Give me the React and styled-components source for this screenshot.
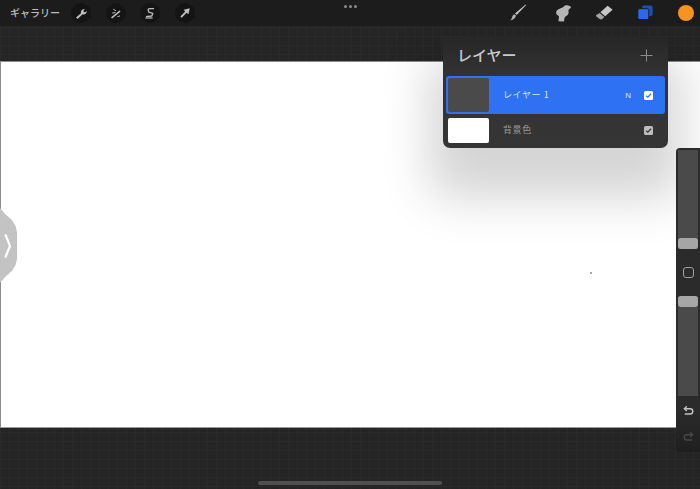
import React from "react";
import styled, { createGlobalStyle } from "styled-components";

const GlobalStyle = createGlobalStyle`
  html, body {
    margin: 0;
    padding: 0;
    background: #252525;
  }
  body {
    font-family: "Noto Sans CJK JP", "Noto Sans", sans-serif;
  }
`;

const Screen = styled.div`
  position: relative;
  width: 700px;
  height: 489px;
  overflow: hidden;
  display: flex;
  flex-direction: column;
  background-color: #252525;
  background-image:
    linear-gradient(to right, #2a2a2a 1px, transparent 1px),
    linear-gradient(to bottom, #2a2a2a 1px, transparent 1px);
  background-size: 9px 9px;
`;

const TopBar = styled.header`
  height: 26px;
  flex: none;
  display: flex;
  align-items: center;
  justify-content: space-between;
  padding: 0 6px 0 10px;
  background: #1c1c1c;
  position: relative;
  z-index: 3;
`;

const Group = styled.div`
  display: flex;
  align-items: center;
`;

const Gallery = styled.span`
  width: 61px;
  flex: none;
  font-size: 10px;
  font-weight: 500;
  line-height: 26px;
  color: #bcbcbc;
  white-space: nowrap;
`;

const RoundTool = styled.button`
  width: 20px;
  height: 20px;
  padding: 0;
  margin-right: 14.5px;
  border: none;
  border-radius: 50%;
  background: #141414;
  display: flex;
  align-items: center;
  justify-content: center;
`;

const PaintTool = styled.button`
  width: 20px;
  height: 20px;
  padding: 0;
  margin-left: ${(p) => p.$gap}px;
  border: none;
  background: transparent;
  display: flex;
  align-items: center;
  justify-content: center;
`;

const ColorDot = styled.div`
  width: 16px;
  height: 16px;
  margin-left: 23px;
  border-radius: 50%;
  background: #f7931e;
`;

const Dots = styled.div`
  position: absolute;
  left: 344px;
  top: 5px;
  display: flex;
  gap: 2px;
  span {
    width: 3px;
    height: 3px;
    border-radius: 50%;
    background: #8a8a8a;
  }
`;

const Canvas = styled.main`
  margin: 35px 0 61px;
  flex: 1;
  background: #ffffff;
  border-top: 1px solid #8c8c8c;
  border-left: 1px solid #8c8c8c;
  border-bottom: 1px solid #9a9a9a;
  position: relative;
`;

const Speck = styled.i`
  position: absolute;
  left: 589px;
  top: 210px;
  width: 2px;
  height: 2px;
  background: #b5a5a5;
`;

const Panel = styled.section`
  position: absolute;
  left: 443px;
  top: 37px;
  width: 225px;
  height: 111px;
  box-sizing: border-box;
  padding: 0 3px;
  border-radius: 0 0 7px 7px;
  background: linear-gradient(to bottom, #262626 0%, #333333 35%, #353535 100%);
  box-shadow: 0 36px 48px 14px rgba(0, 0, 0, 0.17);
  z-index: 2;
`;

const PanelHead = styled.div`
  height: 39px;
  display: flex;
  align-items: center;
  justify-content: space-between;
  padding: 0 12px 3px 12px;
  box-sizing: border-box;
`;

const PanelTitle = styled.h2`
  margin: 0 0 0 -1px;
  font-size: 15px;
  font-weight: 500;
  line-height: 20px;
  color: #c9c9c9;
`;

const LayerRow = styled.div`
  height: ${(p) => (p.$active ? 38 : 28)}px;
  margin-bottom: ${(p) => (p.$active ? 2 : 0)}px;
  box-sizing: border-box;
  display: flex;
  align-items: center;
  padding: 0 12px 0 2px;
  border-radius: 3px;
  background: ${(p) => (p.$active ? "#2e72f3" : "transparent")};
  color: ${(p) => (p.$active ? "#d9e5fb" : "#9b9b9b")};
`;

const Thumb = styled.div`
  width: 41px;
  height: ${(p) => (p.$active ? 34 : 25)}px;
  flex: none;
  border-radius: 2px;
  background: ${(p) => (p.$active ? "#4a4a4a" : "#ffffff")};
`;

const LayerName = styled.span`
  margin-left: 14px;
  flex: 1;
  font-size: 9px;
  line-height: 12px;
  white-space: nowrap;
  letter-spacing: 0.6px;
`;

const Mode = styled.span`
  margin-right: 13px;
  font-family: "Liberation Sans", sans-serif;
  font-size: 8px;
  color: #d9e5fb;
`;

const Check = styled.div`
  width: 9px;
  height: 9px;
  flex: none;
  border-radius: 1.5px;
  background: ${(p) => (p.$active ? "#ffffff" : "#bdbdbd")};
  display: flex;
  align-items: center;
  justify-content: center;
`;

const SideBar = styled.aside`
  position: absolute;
  right: 0;
  top: 148px;
  width: 24px;
  height: 304px;
  box-sizing: border-box;
  padding: 2px 2px 0;
  border-radius: 4px 0 0 4px;
  background: linear-gradient(to bottom, #2b2b2b 0%, #2b2b2b 86%, #1f1f1f 100%);
  display: flex;
  flex-direction: column;
  align-items: center;
  z-index: 2;
`;

const Track = styled.div`
  position: relative;
  width: 20px;
  height: ${(p) => p.$height}px;
  flex: none;
  background: #4a4a4a;
  border-radius: 1px;
`;

const Knob = styled.div`
  position: absolute;
  left: 0;
  right: 0;
  height: 11px;
  border-radius: 3px;
  background: #a6a6a6;
  ${(p) => (p.$end ? "bottom: 0;" : "top: 0;")}
`;

const ModifyBtn = styled.div`
  width: 11px;
  height: 11px;
  margin: 18px 0 18px;
  flex: none;
  box-sizing: border-box;
  border: 1.5px solid #a0a0a0;
  border-radius: 3px;
`;

const HistoryBtn = styled.div`
  height: 14px;
  margin-top: ${(p) => p.$top}px;
  display: flex;
  align-items: center;
  justify-content: center;
`;

const SideHandle = styled.div`
  position: absolute;
  left: 0;
  top: 208px;
  width: 17px;
  height: 75px;
  background: #c3c3c3;
  clip-path: polygon(0 0, 30% 8%, 70% 16%, 92% 24%, 100% 32%, 100% 68%, 92% 76%, 70% 84%, 30% 92%, 0 100%);
  display: flex;
  align-items: center;
  padding-left: 4px;
  box-sizing: border-box;
  z-index: 2;
`;

const HomeBar = styled.div`
  position: absolute;
  left: 258px;
  bottom: 4px;
  width: 184px;
  height: 4px;
  border-radius: 2px;
  background: #505050;
  z-index: 2;
`;

const toolColor = "#bdbdbd";

const WrenchIcon = () => (
  <svg width="14" height="14" viewBox="0 0 14 14">
    <path
      d="M2 11.4 7 7.2C6.6 5.8 7.2 4.4 8.4 3.6 9.2 3.2 10 3.1 10.8 3.4L9.4 4.8 9.8 6 11.2 6.3 12.6 5C12.8 6.2 12.3 7.4 11.3 8 10.4 8.6 9.4 8.6 8.6 8.2L3.6 13Z"
      fill={toolColor}
    />
  </svg>
);

const WandIcon = () => (
  <svg width="14" height="14" viewBox="0 0 14 14" stroke={toolColor} fill="none" strokeLinecap="round">
    <path d="M3 11.6 10.6 5.4" strokeWidth="1.5" />
    <path d="M4.6 3.4 6.6 4.6M3.6 7 6 6.6M8.8 10.6 10.6 10" strokeWidth="1" />
  </svg>
);

const SelectIcon = () => (
  <svg width="14" height="14" viewBox="0 0 14 14" fill="none" stroke={toolColor} strokeWidth="1.3">
    <path d="M11 2.6H6.6C5.6 2.6 5 3.2 5.2 4L5.8 6.2 9.8 7.4 8.8 10 3 10.6" strokeLinejoin="round" />
    <path d="M2.4 12H9.6" strokeWidth="1.2" />
  </svg>
);

const ArrowIcon = () => (
  <svg width="12" height="12" viewBox="0 0 14 14">
    <path d="M12.6 1.4 11 8.6 8.9 6.8 3.2 12.6 1.6 11 7.2 5.2 5.4 3.2Z" fill={toolColor} />
  </svg>
);

const BrushIcon = () => (
  <svg width="20" height="20" viewBox="0 0 20 20">
    <path d="M18.2 2 8.6 12 7 10.6 17.6 1.6Z" fill="#c4c4c4" />
    <path d="M6.4 11.2 8 12.8C7.6 15 5.8 16.6 2.2 17.6 3.8 16 4 14.6 4.4 13.2 4.8 12.2 5.6 11.6 6.4 11.2Z" fill="#b0b0b0" />
  </svg>
);

const SmudgeIcon = () => (
  <svg width="20" height="20" viewBox="0 0 20 20">
    <path
      d="M12 2.4C13.6 1.8 16.4 2.4 17.6 3.6 18.2 4.6 17.8 5.4 16.6 5.8L15.4 7 15.6 10C15.4 11.6 14 12.6 12.8 13.2L11.6 14.4 11 18.4 5.4 18.2 6 13.6 3.4 11C2.8 9.2 3.2 7.4 5 6.4L8.2 5C9.6 4.6 10.8 3.4 12 2.4Z"
      fill="#b5b5b5"
    />
  </svg>
);

const EraserIcon = () => (
  <svg width="20" height="20" viewBox="0 0 20 20">
    <path d="M13.6 2.8 18.6 6.8 11.2 13.2 6.4 9.2Z" fill="#c6c6c6" />
    <path d="M5.6 10 10.4 14 8.2 16C7.4 16.6 6.4 16.6 5.6 16L2.4 13.6C1.8 13 1.8 12.4 2.4 12Z" fill="#a2a2a2" />
  </svg>
);

const LayersIcon = () => (
  <svg width="20" height="20" viewBox="0 0 20 20">
    <rect x="7" y="2.4" width="10.6" height="10.6" rx="2" fill="#1d4fb4" />
    <rect x="2.8" y="5.6" width="11" height="11" rx="2" stroke="#1c1c1c" strokeWidth="1" fill="#2b68ea" />
  </svg>
);

const PlusIcon = () => (
  <svg width="13" height="13" viewBox="0 0 13 13" stroke="#8c8c8c" strokeWidth="1">
    <path d="M6.5 0.5V12.5M0.5 6.5H12.5" />
  </svg>
);

const Chevron = () => (
  <svg width="8" height="24" viewBox="0 0 8 24" fill="none" stroke="#ffffff" strokeWidth="2.2" strokeLinecap="round">
    <path d="M1.6 1.2 6 12 1.6 22.8" />
  </svg>
);

const CheckMark = ({ color }) => (
  <svg width="7" height="7" viewBox="0 0 7 7" fill="none" stroke={color} strokeWidth="1.3">
    <path d="M1 3.8 2.8 5.2 6 1.8" />
  </svg>
);

const UndoIcon = () => (
  <svg width="11" height="10" viewBox="0 0 13 12" fill="none" stroke="#c2c2c2" strokeWidth="1.7" strokeLinecap="round">
    <path d="M4 1 1.6 3.2 4 5.4" />
    <path d="M2 3.2H8.6C10.6 3.2 11.6 4.6 11.6 6.2S10.6 9.6 8.6 9.6H2.6" />
  </svg>
);

const RedoIcon = () => (
  <svg width="11" height="10" viewBox="0 0 13 12" fill="none" stroke="#484848" strokeWidth="1.7" strokeLinecap="round">
    <path d="M9 1 11.4 3.2 9 5.4" />
    <path d="M11 3.2H4.4C2.4 3.2 1.4 4.6 1.4 6.2S2.4 9.6 4.4 9.6H10.4" />
  </svg>
);

const layers = [
  { name: "レイヤー 1", active: true },
  { name: "背景色", active: false },
];

export default function App() {
  return (
    <>
      <GlobalStyle />
      <Screen>
        <TopBar>
          <Group>
            <Gallery>ギャラリー</Gallery>
            <RoundTool><WrenchIcon /></RoundTool>
            <RoundTool><WandIcon /></RoundTool>
            <RoundTool><SelectIcon /></RoundTool>
            <RoundTool><ArrowIcon /></RoundTool>
          </Group>
          <Dots><span /><span /><span /></Dots>
          <Group>
            <PaintTool $gap={0}><BrushIcon /></PaintTool>
            <PaintTool $gap={25}><SmudgeIcon /></PaintTool>
            <PaintTool $gap={21}><EraserIcon /></PaintTool>
            <PaintTool $gap={21}><LayersIcon /></PaintTool>
            <ColorDot />
          </Group>
        </TopBar>

        <Canvas><Speck /></Canvas>

        <Panel>
          <PanelHead>
            <PanelTitle>レイヤー</PanelTitle>
            <PlusIcon />
          </PanelHead>
          {layers.map((layer) => (
            <LayerRow key={layer.name} $active={layer.active}>
              <Thumb $active={layer.active} />
              <LayerName>{layer.name}</LayerName>
              {layer.active && <Mode>N</Mode>}
              <Check $active={layer.active}>
                <CheckMark color={layer.active ? "#2e72f3" : "#3a3a3a"} />
              </Check>
            </LayerRow>
          ))}
        </Panel>

        <SideBar>
          <Track $height={99}><Knob $end /></Track>
          <ModifyBtn />
          <Track $height={100}><Knob /></Track>
          <HistoryBtn $top={8}><UndoIcon /></HistoryBtn>
          <HistoryBtn $top={12}><RedoIcon /></HistoryBtn>
        </SideBar>

        <SideHandle><Chevron /></SideHandle>
        <HomeBar />
      </Screen>
    </>
  );
}
